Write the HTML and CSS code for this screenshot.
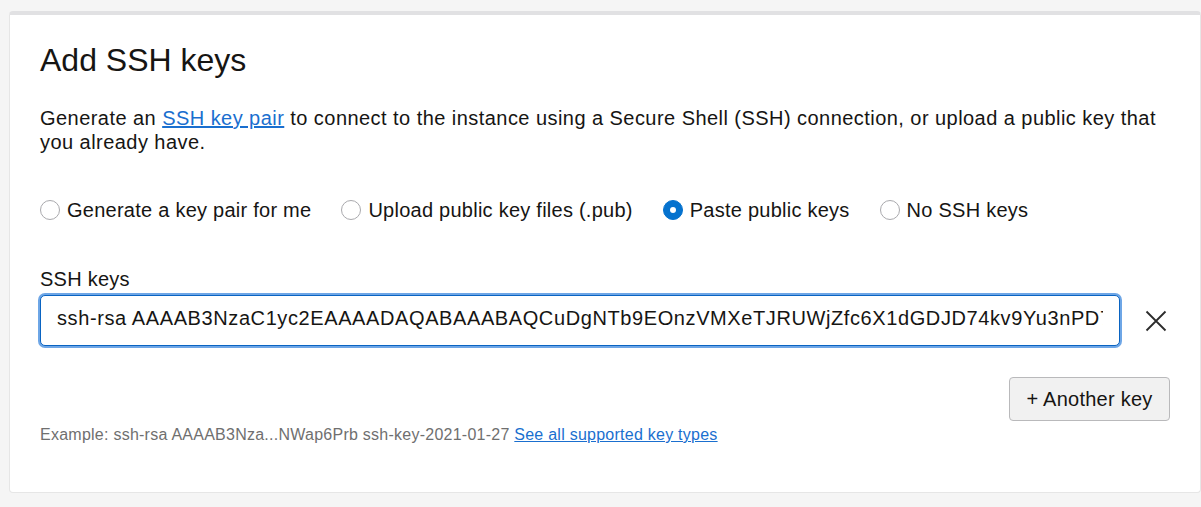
FILE: index.html
```html
<!DOCTYPE html>
<html lang="en">
<head>
<meta charset="utf-8">
<title>Add SSH keys</title>
<link rel="stylesheet" href="styles.css">
</head>
<body>
<section class="card">
  <h2 class="title">Add SSH keys</h2>
  <p class="intro">Generate an <a href="#" class="link">SSH key pair</a> to connect to the instance using a Secure Shell (SSH) connection, or upload a public key that you already have.</p>
  <div class="radios">
    <label class="radio"><span class="dot"></span>Generate a key pair for me</label>
    <label class="radio"><span class="dot"></span>Upload public key files (.pub)</label>
    <label class="radio"><span class="dot checked"></span>Paste public keys</label>
    <label class="radio"><span class="dot"></span>No SSH keys</label>
  </div>
  <div class="field-label">SSH keys</div>
  <div class="key-row">
    <input class="key-input" type="text" value="ssh-rsa AAAAB3NzaC1yc2EAAAADAQABAAABAQCuDgNTb9EOnzVMXeTJRUWjZfc6X1dGDJD74kv9Yu3nPD7x8kL2qRwZs9Fh3mT0uVbN1cX">
    <button class="remove" type="button" aria-label="Remove">
      <svg width="22" height="22" viewBox="0 0 22 22"><path d="M1.5 1.5 L20.5 20.5 M20.5 1.5 L1.5 20.5" stroke="#2b2b2b" stroke-width="1.8" fill="none"/></svg>
    </button>
  </div>
  <div class="actions">
    <button class="another" type="button">+ Another key</button>
  </div>
  <div class="example">Example: ssh-rsa AAAAB3Nza...NWap6Prb ssh-key-2021-01-27 <a href="#" class="link">See all supported key types</a></div>
</section>
</body>
</html>
```

FILE: styles.css
```css
* { box-sizing: border-box; }

body {
  margin: 0;
  background: #f5f5f5;
  font-family: "Liberation Sans", Arial, sans-serif;
  color: #161513;
}

.card {
  margin: 11px 0 0 9px;
  background: #ffffff;
  border: 1px solid #e6e6e6;
  border-top: 4px solid #e1e1e3;
  border-radius: 4px;
  padding: 25px 30px 0 30px;
  height: 482px;
}

.title {
  margin: 0;
  font-size: 32px;
  font-weight: 400;
  line-height: 40px;
}

.intro {
  margin: 26px 0 0 0;
  font-size: 20px;
  line-height: 24px;
  letter-spacing: 0.45px;
}

.link {
  color: #1a6fcf;
  text-decoration: underline;
}

.radios {
  margin-top: 44px;
  display: flex;
  gap: 30px;
  height: 24px;
  align-items: center;
}

.radio {
  display: flex;
  align-items: center;
  gap: 7px;
  font-size: 20px;
  line-height: 24px;
  letter-spacing: 0.25px;
}

.dot {
  width: 20px;
  height: 20px;
  border-radius: 50%;
  border: 1px solid #a9a9ad;
  background: #fff;
  display: inline-block;
  position: relative;
  flex: none;
}

.dot.checked {
  background: #0572ce;
  border-color: #0572ce;
}

.dot.checked::after {
  content: "";
  position: absolute;
  left: 6px;
  top: 6px;
  width: 6px;
  height: 6px;
  border-radius: 50%;
  background: #fff;
}

.field-label {
  margin-top: 45px;
  font-size: 20px;
  line-height: 24px;
  letter-spacing: 0.25px;
}

.key-row {
  margin-top: 4px;
  display: flex;
  align-items: center;
  gap: 22px;
}

.key-input {
  flex: 1;
  height: 51px;
  border: 1px solid #0a64c2;
  border-radius: 5px;
  box-shadow: 0 0 0 2px #6ea6e6;
  padding: 0 16px 4px 16px;
  font-family: "Liberation Sans", Arial, sans-serif;
  font-size: 20px;
  letter-spacing: 0.6px;
  color: #161513;
  outline: none;
  background: #fff;
}

.remove {
  width: 28px;
  height: 28px;
  padding: 0;
  border: 0;
  background: transparent;
  display: flex;
  align-items: center;
  justify-content: center;
}

.actions {
  margin-top: 31px;
  display: flex;
  justify-content: flex-end;
}

.another {
  height: 44px;
  width: 161px;
  padding: 0;
  background: #f1f1f1;
  border: 1px solid #b9b9bb;
  border-radius: 4px;
  font-family: "Liberation Sans", Arial, sans-serif;
  font-size: 20px;
  letter-spacing: 0.25px;
  color: #161513;
}

.example {
  margin-top: 4px;
  font-size: 16px;
  line-height: 20px;
  letter-spacing: 0.25px;
  color: #6f6f6f;
}
```
